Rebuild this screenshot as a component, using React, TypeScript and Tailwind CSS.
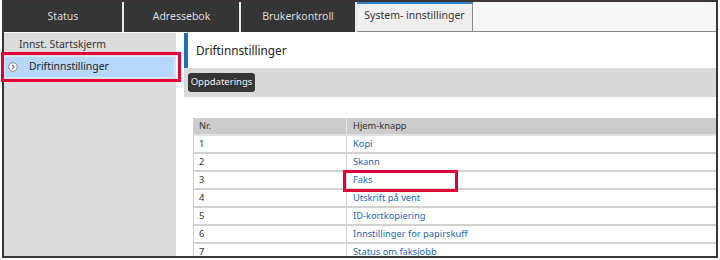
import React from "react";

const rows: [string, string][] = [
  ["1", "Kopi"],
  ["2", "Skann"],
  ["3", "Faks"],
  ["4", "Utskrift på vent"],
  ["5", "ID-kortkopiering"],
  ["6", "Innstillinger for papirskuff"],
  ["7", "Status om faksjobb"],
];

export default function App() {
  return (
    <div
      className="relative w-[720px] h-[260px] bg-white overflow-hidden"
      style={{ fontFamily: '"Noto Sans", "Open Sans", sans-serif' }}
    >
      <div className="ml-[2px] w-[716px] h-[258px] border-2 border-[#3a3533] flex flex-col overflow-hidden">
        {/* Tab bar */}
        <div className="flex h-[30px] shrink-0 text-[10.5px]">
          <div className="w-[118px] bg-[#353535] text-[#dcdcdc] flex items-center justify-center">Status</div>
          <div className="w-[2px] bg-[#e8e8e8]" />
          <div className="w-[115px] bg-[#353535] text-[#dcdcdc] flex items-center justify-center">Adressebok</div>
          <div className="w-[2px] bg-[#e8e8e8]" />
          <div className="w-[114px] bg-[#353535] text-[#dcdcdc] flex items-center justify-center">Brukerkontroll</div>
          <div className="w-[2px] bg-[#e8e8e8]" />
          <div className="w-[116px] bg-[#efefef] border-t-2 border-t-[#2f7fd0] border-r border-r-[#8a8a8a] border-b border-b-[#8a8a8a] text-[#333] flex items-center justify-center pb-[3px]">
            System- innstillinger
          </div>
          <div className="flex-1 bg-[#f7f7f7] border-b border-b-[#8a8a8a]" />
        </div>
        {/* Body */}
        <div className="flex flex-1 pt-[1px] min-h-0">
          <div className="w-[172px] bg-[#dcdcdc] shrink-0 flex flex-col text-[10.4px]">
            <div className="h-[22px] flex items-center pl-[15px] pt-[2px] text-[#333]">Innst. Startskjerm</div>
            <div className="h-[22px] mt-[1px] mr-[1px] flex items-center bg-[#b7d8fa] border border-[#d6e9fc] text-[#222]">
              <svg width="10" height="10" viewBox="0 0 10 10" className="ml-[3px]">
                <circle cx="5" cy="5" r="4.2" fill="#ffffff" stroke="#8c8c8c" strokeWidth="1.1" />
                <path d="M4.1 3 L6 5 L4.1 7" fill="none" stroke="#7a7a7a" strokeWidth="1.2" />
              </svg>
              <span className="ml-[11px]">Driftinnstillinger</span>
            </div>
          </div>
          <div className="flex-1 ml-[8px] flex flex-col min-w-0">
            <div className="h-[35px] flex items-center border-l-4 border-l-[#1f6fb9] pl-[8px] pt-[1px] text-[11.8px] text-[#222] shrink-0">
              Driftinnstillinger
            </div>
            <div className="h-[29px] bg-[#d9d9d9] pl-[4px] pt-[5px] shrink-0">
              <div className="w-[67px] h-[19px] rounded-[3px] bg-[#353535] text-[#f2f2f2] text-[9.5px] flex items-center justify-center">
                Oppdaterings
              </div>
            </div>
            <div className="pl-[9px] pt-[21px]">
              <div className="border-l border-[#d0d0d0] text-[9.3px]">
                <div className="grid grid-cols-[153px_1fr] h-[18px] bg-[#cccccc] text-[#333] border-b-2 border-[#e2e2e2]">
                  <div className="pl-[5px] flex items-center border-r border-[#e6e6e6]">Nr.</div>
                  <div className="pl-[6px] flex items-center">Hjem-knapp</div>
                </div>
                {rows.map(([n, label]) => (
                  <div key={n} className="grid grid-cols-[153px_1fr] h-[18px] border-b-2 border-[#d2d2d2]">
                    <div className="pl-[5px] flex items-center text-[#333] border-r border-[#d6d6d6]">{n}</div>
                    <div className="pl-[6px] flex items-center text-[#2468c0]">{label}</div>
                  </div>
                ))}
              </div>
            </div>
          </div>
        </div>
      </div>
      {/* Annotation boxes */}
      <div className="absolute left-[1px] top-[52px] w-[180px] h-[30px] border-[3px] border-[#e2003a]" />
      <div className="absolute left-[343px] top-[170px] w-[115px] h-[22px] border-[3px] border-[#e2003a]" />
    </div>
  );
}
